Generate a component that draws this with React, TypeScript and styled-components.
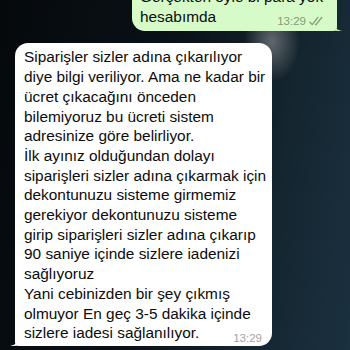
import React from "react";
import styled, { createGlobalStyle } from "styled-components";

const Global = createGlobalStyle`
  html, body { margin: 0; padding: 0; background: #0b141a; }
  * { box-sizing: border-box; }
`;

const Screen = styled.div`
  width: 350px;
  height: 350px;
  overflow: hidden;
  display: flex;
  flex-direction: column;
  gap: 12px;
  font-family: "Liberation Sans", Arial, sans-serif;
  background:
    radial-gradient(ellipse 28px 40px at 272px 42px, rgba(175, 175, 175, 0.5), rgba(175, 175, 175, 0) 100%),
    linear-gradient(100deg, #05090c 0%, #0a1117 45%, #14252f 75%, #1b3040 100%);
`;

const Bubble = styled.div<{ $out?: boolean }>`
  position: relative;
  background: ${(p) => (p.$out ? "#d7fbc8" : "#ffffff")};
  color: #0c0c0c;
  border-radius: 13px;
  font-size: 15.4px;
  line-height: 19.7px;
  ${(p) =>
    p.$out
      ? `
    width: 205px;
    margin: -18px 13px 0 auto;
    padding: 5px 12px 5px 8px;
    border-bottom-right-radius: 4px;
  `
      : `
    width: 257px;
    margin: 0 0 0 15px;
    padding: 4px 10px 3px 9px;
    border-bottom-left-radius: 4px;
  `}
`;

const Tail = styled.svg<{ $out?: boolean }>`
  position: absolute;
  bottom: 0;
  width: 10px;
  height: 12px;
  ${(p) => (p.$out ? "right: -5px;" : "left: -5px; transform: scaleX(-1);")}
`;

const Line = styled.div`
  white-space: nowrap;
`;

const LastRow = styled.div`
  display: flex;
  justify-content: space-between;
  align-items: flex-end;
  white-space: nowrap;
`;

const Meta = styled.span<{ $out?: boolean }>`
  display: inline-flex;
  align-items: center;
  gap: 3px;
  font-size: 11.5px;
  line-height: 14px;
  color: ${(p) => (p.$out ? "#809c78" : "#a3a3a3")};
  transform: translateY(2px);
`;

const Ticks = () => (
  <svg width="16" height="10" viewBox="0 0 16 10" fill="none" stroke="#7f9b77" strokeWidth="1.3" strokeLinecap="round" strokeLinejoin="round">
    <path d="M1 6.2 L3.2 8.6 L9 1.4" />
    <path d="M6.6 8.4 L7 8.7 L12.8 1.4" />
  </svg>
);

const TailShape = ({ out, color }: { out?: boolean; color: string }) => (
  <Tail $out={out} viewBox="0 0 10 12">
    <path d="M0 0 C0 6 2 10 10 12 C5 12 2 11.5 0 11 Z" fill={color} />
  </Tail>
);

const incoming = [
  "Siparişler sizler adına çıkarılıyor",
  "diye bilgi veriliyor. Ama ne kadar bir",
  "ücret çıkacağını önceden",
  "bilemiyoruz bu ücreti sistem",
  "adresinize göre belirliyor.",
  "İlk ayınız olduğundan dolayı",
  "siparişleri sizler adına çıkarmak için",
  "dekontunuzu sisteme girmemiz",
  "gerekiyor dekontunuzu sisteme",
  "girip siparişleri sizler adına çıkarıp",
  "90 saniye içinde sizlere iadenizi",
  "sağlıyoruz",
  "Yani cebinizden bir şey çıkmış",
  "olmuyor En geç 3-5 dakika içinde",
];

export default function App() {
  return (
    <>
      <Global />
      <Screen>
        <Bubble $out>
          <Line>Gerçekten öyle bi para yok</Line>
          <LastRow>
            <span>hesabımda</span>
            <Meta $out>
              13:29 <Ticks />
            </Meta>
          </LastRow>
          <TailShape out color="#d7fbc8" />
        </Bubble>
        <Bubble>
          {incoming.map((l) => (
            <Line key={l}>{l}</Line>
          ))}
          <LastRow>
            <span>sizlere iadesi sağlanılıyor.</span>
            <Meta>13:29</Meta>
          </LastRow>
          <TailShape color="#ffffff" />
        </Bubble>
      </Screen>
    </>
  );
}
